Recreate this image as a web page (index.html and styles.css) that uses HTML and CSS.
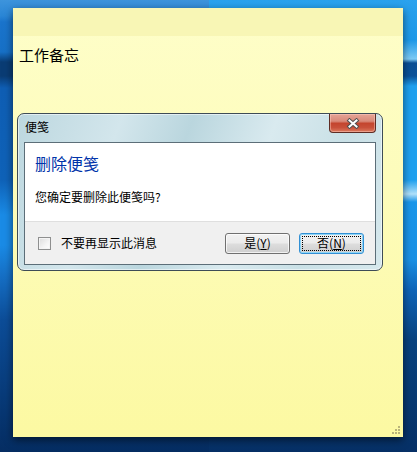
FILE: index.html
```html
<!DOCTYPE html>
<html lang="zh-CN">
<head>
    <meta charset="UTF-8">
    <title>便笺</title>
    <link rel="stylesheet" href="styles.css">
</head>
<body>
    <div class="desktop">
        <div class="note">
            <div class="note-top"></div>
            <div class="note-body">工作备忘</div>
            <svg class="grip" width="8" height="8" viewBox="0 0 8 8">
                <rect x="6" y="0" width="2" height="2" fill="#b9b47a"/>
                <rect x="6" y="3" width="2" height="2" fill="#b9b47a"/>
                <rect x="3" y="3" width="2" height="2" fill="#b9b47a"/>
                <rect x="6" y="6" width="2" height="2" fill="#b9b47a"/>
                <rect x="3" y="6" width="2" height="2" fill="#b9b47a"/>
                <rect x="0" y="6" width="2" height="2" fill="#b9b47a"/>
            </svg>
        </div>

        <div class="dialog">
            <div class="dialog-title">便笺</div>
            <div class="close-btn">
                <svg width="14" height="11" viewBox="0 0 14 11">
                    <path d="M3.5 2.5 L10.5 8.5 M10.5 2.5 L3.5 8.5" stroke="#505050" stroke-width="4" stroke-linecap="square"/>
                    <path d="M3.5 2.5 L10.5 8.5 M10.5 2.5 L3.5 8.5" stroke="#ffffff" stroke-width="2" stroke-linecap="square"/>
                </svg>
            </div>
            <div class="panel">
                <div class="panel-content">
                    <div class="instruction">删除便笺</div>
                    <div class="message">您确定要删除此便笺吗?</div>
                </div>
                <div class="panel-footer">
                    <label class="check">
                        <span class="check-box"></span>
                        <span>不要再显示此消息</span>
                    </label>
                    <div class="buttons">
                        <button class="btn">是(<u>Y</u>)</button>
                        <button class="btn btn-default">否(<u>N</u>)</button>
                    </div>
                </div>
            </div>
        </div>
    </div>
</body>
</html>
```

FILE: styles.css
```css
* {
    margin: 0;
    padding: 0;
    box-sizing: border-box;
}

body {
    font-family: "Noto Sans CJK SC", "Liberation Sans", sans-serif;
    width: 417px;
    height: 452px;
    overflow: hidden;
}

.desktop {
    position: relative;
    width: 417px;
    height: 452px;
    padding: 8px 14px 15px 13px;
    background:
        linear-gradient(to bottom, #2aa2ee 0, #1d98e8 40px, #7ccaf5 59px, #0a4f95 63px, #0b5299 76px, #1ea0ef 86px, #1ea0ef 180px, #b0e0fa 194px, #1a96ea 202px, #1a90e4 260px, #0e64b8 290px, #08427f 340px, #063066 452px) right top / 208px 100% no-repeat,
        linear-gradient(to bottom, #3d94dc 0, #2a86d6 16px, #1a74cc 22px, #1770c6 52px, #0a3c74 62px, #0a3c74 76px, #0f5eb4 88px, #0f62b8 180px, #1a8be6 215px, #1a8be6 245px, #1670c6 275px, #0c4d98 320px, #052d62 452px) left top / 209px 100% no-repeat;
}

/* sticky note */
.note {
    position: relative;
    width: 390px;
    height: 429px;
    background: linear-gradient(to bottom, #fefec9 0%, #fdfcbb 40%, #fcf9a2 100%);
    box-shadow: 0 3px 8px rgba(0, 0, 0, 0.55);
}

.note-top {
    height: 28px;
    background-color: #f8f6b5;
}

.note-body {
    padding: 9px 6px;
    font-size: 15px;
    line-height: 20px;
    color: #000;
}

.grip {
    position: absolute;
    right: 3px;
    bottom: 3px;
}

/* dialog window */
.dialog {
    position: absolute;
    left: 17px;
    top: 113px;
    width: 366px;
    height: 158px;
    border: 1px solid #3e4c56;
    border-radius: 7px;
    background: linear-gradient(110deg, #bcd7df 0%, #d3e6ec 25%, #bad6de 42%, #d9eaef 62%, #c9e0e6 80%, #d6e8ed 100%);
    box-shadow: inset 0 0 0 1px rgba(255, 255, 255, 0.55);
}

.dialog-title {
    height: 28px;
    padding: 5px 7px 0;
    font-size: 12px;
    line-height: 16px;
    color: #000;
}

.close-btn {
    position: absolute;
    top: 0;
    right: 6px;
    width: 47px;
    height: 19px;
    border: 1px solid #5e2c24;
    border-top: none;
    border-radius: 0 0 4px 4px;
    background: linear-gradient(to bottom, #e6a496 0%, #d98a7a 40%, #c4452e 52%, #c8503a 75%, #dc7a5e 100%);
    box-shadow: inset 0 0 0 1px rgba(255, 210, 200, 0.45);
    display: flex;
    align-items: center;
    justify-content: center;
}

.panel {
    margin: 0 6px;
    height: 123px;
    border: 1px solid #5c6e78;
    background-color: #f0f0f0;
}

.panel-content {
    height: 78px;
    padding: 9px 10px;
    background-color: #fff;
}

.instruction {
    font-size: 16px;
    line-height: 22px;
    color: #0033aa;
}

.message {
    margin-top: 15px;
    font-size: 12px;
    line-height: 16px;
    color: #000;
}

.panel-footer {
    height: 43px;
    border-top: 1px solid #dfdfdf;
    padding: 0 11px 0 13px;
    display: flex;
    align-items: center;
    justify-content: space-between;
}

.check {
    display: flex;
    align-items: center;
    gap: 10px;
    font-size: 12px;
    line-height: 16px;
    color: #000;
}

.check-box {
    width: 13px;
    height: 13px;
    border: 1px solid #8e8f8f;
    background: linear-gradient(135deg, #dcdcdc 0%, #f4f4f4 60%, #ffffff 100%);
    box-shadow: inset 0 0 0 1px #f4f4f4;
}

.buttons {
    display: flex;
    gap: 9px;
}

.btn {
    position: relative;
    width: 65px;
    height: 21px;
    border: 1px solid #707070;
    border-radius: 3px;
    background: linear-gradient(to bottom, #f2f2f2 0%, #ebebeb 48%, #dddddd 52%, #cfcfcf 100%);
    box-shadow: inset 0 0 0 1px rgba(255, 255, 255, 0.7);
    font-family: "Noto Sans CJK SC", "Liberation Sans", sans-serif;
    font-size: 12px;
    line-height: 16px;
    color: #000;
}

.btn u {
    text-decoration: underline;
}

.btn-default {
    border-color: #3290d4;
    box-shadow: inset 0 0 0 1px #8fd6f8;
}

.btn-default::after {
    content: "";
    position: absolute;
    inset: 2px;
    border: 1px dotted #000;
}
```
